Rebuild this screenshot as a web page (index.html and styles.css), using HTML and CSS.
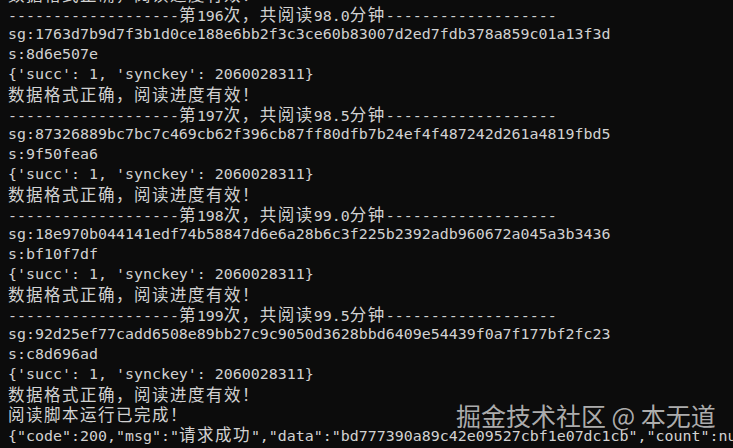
FILE: index.html
```html
<!DOCTYPE html>
<html lang="zh">
<head>
<meta charset="utf-8">
<title>Terminal</title>
<link rel="stylesheet" href="styles.css">
</head>
<body>
<div class="term">
<div class="line"><span class="c">数据格式正确，阅读进度有效！</span></div>
<div class="line">-------------------<span class="c">第</span>196<span class="c">次，共阅读</span>98.0<span class="c">分钟</span>-------------------</div>
<div class="line">sg:1763d7b9d7f3b1d0ce188e6bb2f3c3ce60b83007d2ed7fdb378a859c01a13f3d</div>
<div class="line">s:8d6e507e</div>
<div class="line">{'succ': 1, 'synckey': 2060028311}</div>
<div class="line"><span class="c">数据格式正确，阅读进度有效！</span></div>
<div class="line">-------------------<span class="c">第</span>197<span class="c">次，共阅读</span>98.5<span class="c">分钟</span>-------------------</div>
<div class="line">sg:87326889bc7bc7c469cb62f396cb87ff80dfb7b24ef4f487242d261a4819fbd5</div>
<div class="line">s:9f50fea6</div>
<div class="line">{'succ': 1, 'synckey': 2060028311}</div>
<div class="line"><span class="c">数据格式正确，阅读进度有效！</span></div>
<div class="line">-------------------<span class="c">第</span>198<span class="c">次，共阅读</span>99.0<span class="c">分钟</span>-------------------</div>
<div class="line">sg:18e970b044141edf74b58847d6e6a28b6c3f225b2392adb960672a045a3b3436</div>
<div class="line">s:bf10f7df</div>
<div class="line">{'succ': 1, 'synckey': 2060028311}</div>
<div class="line"><span class="c">数据格式正确，阅读进度有效！</span></div>
<div class="line">-------------------<span class="c">第</span>199<span class="c">次，共阅读</span>99.5<span class="c">分钟</span>-------------------</div>
<div class="line">sg:92d25ef77cadd6508e89bb27c9c9050d3628bbd6409e54439f0a7f177bf2fc23</div>
<div class="line">s:c8d696ad</div>
<div class="line">{'succ': 1, 'synckey': 2060028311}</div>
<div class="line"><span class="c">数据格式正确，阅读进度有效！</span></div>
<div class="line"><span class="c">阅读脚本运行已完成！</span></div>
<div class="line">{"code":200,"msg":"<span class="c">请求成功</span>","data":"bd777390a89c42e09527cbf1e07dc1cb","count":null}</div>
</div>
<div class="watermark">掘金技术社区 @ 本无道</div>
</body>
</html>
```

FILE: styles.css
```css
html, body {
  margin: 0;
  padding: 0;
  background: #0c0c0c;
  width: 733px;
  height: 448px;
  overflow: hidden;
}

body {
  position: relative;
}

.term {
  margin-top: -16px;
  padding-left: 8px;
  color: #d2d2d2;
  font-family: "DejaVu Sans Mono", "Liberation Mono", monospace;
  font-size: 14.95px;
}

.line {
  height: 20px;
  line-height: 20px;
  white-space: pre;
  overflow: visible;
}

.c {
  font-family: "Noto Sans CJK SC", sans-serif;
  font-size: 16.5px;
  letter-spacing: 1.5px;
  line-height: 20px;
}

.watermark {
  position: absolute;
  left: 456px;
  top: 399px;
  font-family: "Noto Sans CJK SC", sans-serif;
  font-size: 25px;
  line-height: 32px;
  color: rgba(210, 210, 210, 0.82);
  white-space: pre;
}
```
